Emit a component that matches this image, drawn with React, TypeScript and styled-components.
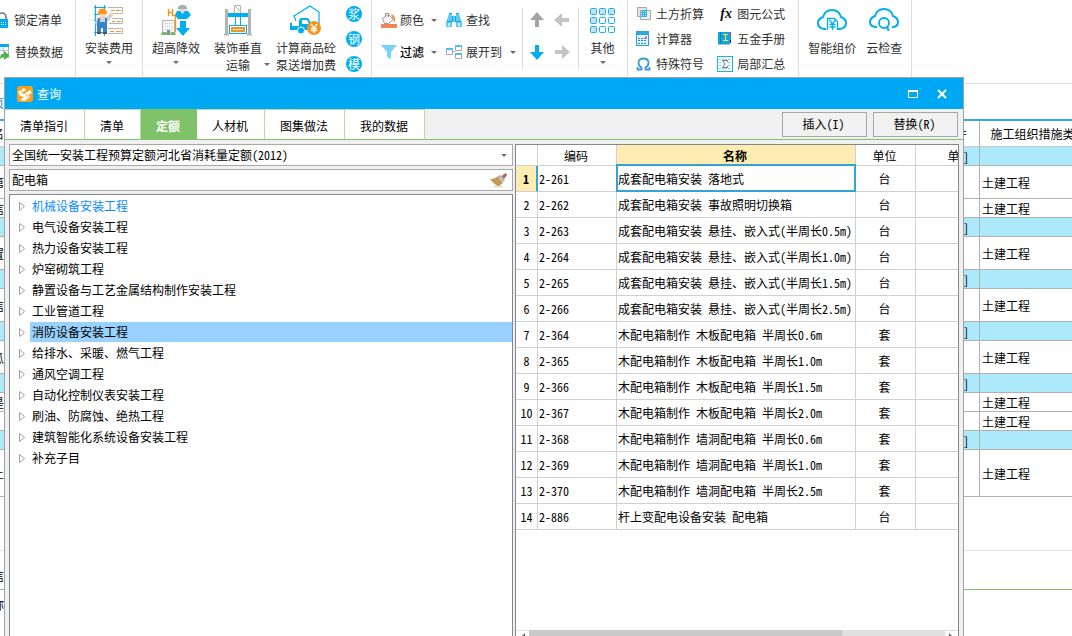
import React from "react";
import styled, { createGlobalStyle, css } from "styled-components";

const GlobalStyle = createGlobalStyle`
  *, *::before, *::after { box-sizing: border-box; }
  body {
    margin: 0;
    background: #fff;
    overflow: hidden;
    font-family: "Noto Sans Mono CJK SC", "Noto Sans CJK SC", sans-serif;
    font-size: 12px;
    line-height: 16px;
    color: #000;
  }
  button, input, select { font: inherit; color: inherit; }
  button { border: 0; background: none; padding: 0; cursor: pointer; }
  svg { display: block; flex: none; }
`;

const Desktop = styled.div`
  position: relative;
  height: 100vh;
  overflow: hidden;
  display: flex;
  flex-direction: column;
`;

/* ---------- ribbon ---------- */

const Ribbon = styled.header`
  display: flex;
  flex: none;
  height: 84px;
  border-bottom: 1px solid #e0e0e0;
  font-family: "Noto Sans CJK SC", sans-serif;
  color: #303030;
`;

const Group = styled.section<{ $gap?: number; $pad?: string }>`
  display: flex;
  flex: none;
  gap: ${(p) => p.$gap ?? 0}px;
  padding: ${(p) => p.$pad ?? "0 9px"};
  border-right: 1px solid #dcdcdc;
`;

const Stack = styled.div<{ $row: number; $top: number }>`
  display: grid;
  grid-auto-rows: ${(p) => p.$row}px;
  align-content: start;
  padding-top: ${(p) => p.$top}px;
`;

const Finders = styled(Stack)`
  padding-left: 9px;
  padding-right: 6px;
`;

const SmallButton = styled.button<{ $strong?: boolean; $gap?: number }>`
  display: flex;
  align-items: center;
  gap: ${(p) => p.$gap ?? 4}px;
  white-space: nowrap;
  ${(p) => p.$strong && css`color: #000; font-weight: 500;`}
`;

const EdgeButton = styled(SmallButton)`
  gap: 6px;
  margin-left: -8px;
`;

const BigButton = styled.button`
  position: relative;
  display: flex;
  flex-direction: column;
  align-items: center;
  align-self: flex-start;
  padding-top: 5px;
  line-height: 17px;
  white-space: nowrap;
`;

const BigIcon = styled.span`
  display: flex;
  align-items: center;
  height: 30px;
  margin-bottom: 4px;
`;

const Trio = styled.div`
  display: flex;
  gap: 14px;
`;

const Below = styled.span`
  padding-top: 5px;
`;

const Beside = styled.span`
  position: absolute;
  right: -8px;
  bottom: 7px;
`;

const AfterLabel = styled.span`
  padding-left: 4px;
`;

const ShortRule = styled.span`
  width: 1px;
  height: 61px;
  margin-top: 8px;
  background: #dcdcdc;
`;

const ArrowPad = styled.div`
  display: grid;
  grid-template-columns: 16px 16px;
  grid-auto-rows: 32px;
  align-content: start;
  column-gap: 9px;
  padding: 4px 8px 0 6px;
`;

const OtherBox = styled.div`
  display: flex;
  padding: 0 12px 0 11px;
`;

const ToolGrid = styled.div`
  display: grid;
  grid-template-columns: auto auto;
  grid-auto-rows: 25px;
  align-content: start;
  column-gap: 13px;
  padding-top: 1px;
`;

const RoundButton = styled.button`
  width: 16px;
  height: 16px;
  align-self: center;
  border-radius: 50%;
  background: #00aeef;
  color: #fff;
  font-size: 12px;
  line-height: 16px;
  display: flex;
  justify-content: center;
`;

const FxMark = styled.span`
  width: 16px;
  padding-left: 2px;
  font: italic bold 14px/16px "Liberation Serif", serif;
  color: #111;
`;

const Caret = () => (
  <svg width="6" height="3" viewBox="0 0 6 3" aria-hidden="true">
    <path d="M0 0h6L3 3z" fill="#6b6b76" />
  </svg>
);

const B = "#00aeef";
const O = "#f7941d";
const G = "#b4b4b4";

const LockIcon = () => (
  <svg width="16" height="16" viewBox="0 0 16 16">
    <path d="M7 8V5a4 4 0 0 1 8 0v3" fill="none" stroke="#8a9096" strokeWidth="2" transform="translate(-1 0)" />
    <rect x="2" y="7" width="15" height="9" rx="1" fill={B} />
    <path d="M9 10.500h1m1 0h1m1 0h1M9 12.500h1m1 0h1m1 0h1" stroke="#fff" />
  </svg>
);
const SwapIcon = () => (
  <svg width="17" height="16" viewBox="0 0 17 16">
    <rect x=".5" y=".5" width="16" height="13" fill="#fff" stroke="#9bb" />
    <path d="M0 1.500h17" stroke={B} strokeWidth="3" />
    <path d="M0 6.500h17M0 10.500h17M5.500 3v11M11.500 3v11" stroke="#a9cfe0" />
    <path d="M8 16c0-5 1-6 4-6V7l6 4.500-6 4.500v-3c-2 0-3 0-4 3z" fill="#4fb548" />
  </svg>
);
const WorkerIcon = () => (
  <svg width="30" height="31" viewBox="0 0 30 31">
    <path d="M1.500 0v31M10.500 0v31M0 2.500h12M0 27.500h12M0 9.500h5M0 15.500h4" stroke={B} fill="none" />
    <g fill="none" stroke={G}>
      <path d="M14 2.500h14.500v6H18M18 13.500h10.500v5H15M14 23.500h14.500v5H14" />
    </g>
    <path d="M17 5.500h4m1 0h5M18 16.500h3m2 0h4M16 26.500h4m2 0h5" stroke={O} />
    <path d="M2 14l4-2h6l4-4 3 2-4 6-2 1v5H3l-2-4z" fill="#cfd3d7" />
    <circle cx="17.500" cy="9" r="1.800" fill="#fbd3a8" />
    <path d="M5 8h7v3q-3 3-7 0z" fill="#fbd3a8" />
    <path d="M4 9q0-5.500 4.500-5.500T13 9z" fill={O} />
    <path d="M4 13h2v4h5v-4h2v16H9v-6H7v6H3V18z" fill="#3b82cc" />
    <path d="M3 27h4v2H3zM9 27h4v2H9z" fill="#4b5560" />
  </svg>
);
const HighIcon = () => (
  <svg width="30" height="31" viewBox="0 0 30 31">
    <path d="M7.500 4v7M11.500 4v7M7 7.500h5" stroke={O} strokeWidth="1.400" fill="none" />
    <path d="M11 10.500h7M14.500 10.500v17" stroke={O} strokeWidth="1.400" fill="none" />
    <path d="M17 3q0-3 4.500-3T26 3v1h-9z" fill="#a9adb1" />
    <path d="M18 4h7q0 4-3.500 4T18 4z" fill="#d8dadc" />
    <path d="M16 6h3l2.500 3L24 6h3l3 4-4 4h-9l-3-4z" fill={B} />
    <path d="M19 16h6v7h4l-7 8-7-8h4z" fill={B} />
    <rect x="1.500" y="15.500" width="12" height="12" fill="#f4f4f4" stroke={G} />
    <path d="M4 18.500h7M4 21.500h7M4 24.500h7" stroke="#c8c8c8" strokeDasharray="1 1" />
    <path d="M7.500 25v5" stroke="#8b9096" strokeWidth="3" />
    <path d="M0 30q0-3 3-3t3 3zM9 30q1-3 3-3t3 3z" fill="#6cb96a" />
  </svg>
);
const LiftIcon = () => (
  <svg width="28" height="31" viewBox="0 0 28 31">
    <path d="M10.500 8V.5h6V8M11 1l5 5" stroke={G} fill="none" />
    <path d="M2.500 4v25M25.500 4v25" stroke={G} strokeWidth="3" />
    <path d="M0 29.500h5M23 29.500h5" stroke={G} strokeWidth="2" />
    <path d="M4 10h20" stroke={B} strokeWidth="4" />
    <path d="M11.500 12v8M16.500 12v8" stroke={B} />
    <rect x="5.500" y="20.500" width="17" height="8" fill="#fff" stroke={B} />
    <rect x="7" y="22" width="14" height="5" fill={O} />
    <path d="M9 24.500h10" stroke="#fff" />
  </svg>
);
const TruckIcon = () => (
  <svg width="32" height="31" viewBox="0 0 32 31">
    <path d="M6 16L4 11 20 1l9 6v12" fill="none" stroke={B} strokeWidth="1.200" />
    <path d="M0 18h2v3h7v-5q0-3 3-3h6l3 5v7H0z" fill={B} />
    <path d="M12 15h5l2 4h-7z" fill="#fff" />
    <circle cx="11" cy="25.500" r="3.500" fill={B} stroke="#fff" />
    <circle cx="24" cy="23" r="7" fill={O} />
    <path d="M21 19l3 4 3-4M24 23v5M21 23.500h6M21 25.500h6" fill="none" stroke="#fff" strokeWidth="1.300" />
  </svg>
);
const PaintIcon = () => (
  <svg width="16" height="16" viewBox="0 0 16 16">
    <path d="M1.500 6.500l6-4 5 5-5 4h-4z" fill="#fff" stroke="#999" />
    <path d="M4.500 5V1.500h3V5" fill="none" stroke="#999" />
    <path d="M10 2q5 1 4 9l-2-4z" fill="#f08a3c" />
    <rect y="12" width="16" height="4" fill="#f6825c" />
  </svg>
);
const FindIcon = () => (
  <svg width="16" height="16" viewBox="0 0 16 16">
    <path d="M3 1h3v3h4V1h3l1 4 2 5v5h-6v-5H6v5H0v-5l2-5z" fill="#5ecbf3" />
    <path d="M3 1.500h3M10 1.500h3M1 9.500h5M10 9.500h5M6.500 4v6M9.500 4v6" stroke="#23a3dc" />
    <path d="M2 11h2v3H2zM12 11h2v3h-2z" fill="#c7effc" />
  </svg>
);
const FilterIcon = () => (
  <svg width="16" height="16" viewBox="0 0 16 16">
    <path d="M0 1h16l-6 7v7l-4-2V8z" fill="#7ad3f5" />
  </svg>
);
const ExpandIcon = () => (
  <svg width="16" height="16" viewBox="0 0 16 16">
    <g fill="#fff" stroke="#a9a9a9">
      <path d="M.5 4.500h6v6h-6zM9.500 1.500h6v5h-6zM9.500 9.500h6v5h-6z" />
      <path d="M7 7.500h2" />
    </g>
    <path d="M0 5h7M9 2h7M9 10h7" stroke="#4fc0ec" strokeWidth="2" />
  </svg>
);
const DirIcon = ({ turn, color }: { turn: number; color: string }) => (
  <svg width="16" height="16" viewBox="0 0 16 16">
    <path transform={`rotate(${turn} 8 8)`} d="M8 0l7 8h-5v7H6V8H1z" fill={color} />
  </svg>
);
const NineIcon = () => (
  <svg width="25" height="25" viewBox="0 0 25 25">
    {[0, 9, 18].map((y, r) =>
      [0, 9, 18].map((x, c) => (
        <rect
          key={`${x}-${y}`}
          x={x + 0.5}
          y={y + 0.5}
          width="6"
          height="6"
          rx="1"
          fill={r === 0 || c === 0 ? "#c5dff3" : "#fff"}
          stroke="#12b0ee"
        />
      ))
    )}
  </svg>
);
const EarthIcon = () => (
  <svg width="16" height="16" viewBox="0 0 16 16">
    <rect x="1.500" y="1.500" width="9" height="9" fill="#e4e4e4" stroke="#aaa" />
    <rect x="4.500" y="4.500" width="10" height="9" fill="#eee" stroke="#aaa" />
    <rect x="5" y="4" width="6" height="7" fill="#2fb3e6" />
    <path d="M5 5.500h6M5 7.500h6M5 9.500h6" stroke="#bfe9fa" strokeDasharray="1 1" />
  </svg>
);
const CalcIcon = () => (
  <svg width="16" height="16" viewBox="0 0 16 16">
    <rect x=".5" y=".5" width="12" height="14" fill="#dff4fd" stroke="#2a9fd8" />
    <path d="M1 2.500h11" stroke="#2aa9e4" strokeWidth="3" />
    <path d="M2 7.500h9M2 9.500h9M2 12.500h9" stroke="#2a86c0" strokeDasharray="2 1" />
    <path d="M9 6.500h2" stroke="#e55" strokeWidth="2" />
  </svg>
);
const OmegaIcon = () => (
  <svg width="16" height="16" viewBox="0 0 16 16">
    <path d="M1.500 11v2.500h4v-2Q2.500 10 2.500 7q0-4.500 5-4.500t5 4.500q0 3-3 4.500v2h4V11" fill="none" stroke="#3a9bd3" strokeWidth="1.800" />
  </svg>
);
const BookIcon = () => (
  <svg width="16" height="16" viewBox="0 0 16 16">
    <rect x="1" y="1" width="12" height="12" fill="#12a5e0" />
    <path d="M3.500 1v12" stroke="#0b7fb8" />
    <path d="M6 3.500h5M8.500 4v6M6 9.500h5" stroke="#ffe23a" />
    <path d="M13.500 1v4" stroke="#e33" />
    <path d="M13.500 5v4" stroke="#3a3" />
    <path d="M13.500 9v3" stroke="#22b" />
    <path d="M1 13.500h12" stroke="#9cc" />
  </svg>
);
const SumIcon = () => (
  <svg width="16" height="16" viewBox="0 0 16 16">
    <rect x=".5" y=".5" width="15" height="15" fill="#f2fbfe" stroke="#1fb0ea" />
    <path d="M2 3.500h12M2 12.500h12M2 6.500h3M11 6.500h3M2 9.500h3M11 9.500h3" stroke="#8ed3ee" strokeDasharray="2 1" />
    <path d="M10.500 6V4.500h-5L8 8l-2.500 3.500h5V10" fill="none" stroke="#777" />
  </svg>
);
const CloudPrice = () => (
  <svg width="30" height="22" viewBox="0 0 30 22">
    <path d="M9 20H7q-6-1-6-6 0-4 5-6 2-7 9-7t9 7q5 2 5 6 0 5-6 6h-2" fill="none" stroke={B} strokeWidth="2" />
    <path d="M10.500 21V9.500h7l3 3V21" fill="none" stroke={B} strokeWidth="1.300" />
    <path d="M12.500 11l3 4 3-4M15.500 15v6M12.500 15.500h6M12.500 18h6" fill="none" stroke={B} strokeWidth="1.300" />
  </svg>
);
const CloudCheck = () => (
  <svg width="30" height="24" viewBox="0 0 30 24">
    <path d="M8 19q-7 0-7-5 0-4 5-6 2-7 9-7t9 7q5 2 5 6 0 5-6 5" fill="none" stroke={B} strokeWidth="2" />
    <circle cx="15" cy="15" r="5" fill="none" stroke={B} strokeWidth="1.800" />
    <path d="M18 18l1.500 5" stroke={B} strokeWidth="2" />
  </svg>
);

const toolGrid: [React.ReactNode, string][] = [
  [<EarthIcon />, "土方折算"],
  [<FxMark aria-hidden="true">fx</FxMark>, "图元公式"],
  [<CalcIcon />, "计算器"],
  [<BookIcon />, "五金手册"],
  [<OmegaIcon />, "特殊符号"],
  [<SumIcon />, "局部汇总"],
];

/* ---------- sheet behind the dialog ---------- */

const Sheet = styled.main`
  flex: 1;
  display: flex;
  flex-direction: column;
  margin-left: -8px;
`;

const PageTab = styled.div`
  height: 37px;
  padding-top: 11px;
  border-bottom: 2px solid #35a9e0;
  color: #0a7fe0;
`;

const SheetTable = styled.table`
  width: calc(100% + 28px);
  table-layout: fixed;
  border-collapse: separate;
  border-spacing: 0;
  th, td {
    padding: 2px 0 0 2px;
    border-bottom: 1px solid #b0b0b0;
    text-align: left;
    overflow: hidden;
    white-space: nowrap;
    font-weight: 400;
  }
  td { line-height: 14px; }
  th { height: 26px; padding: 0 3px 0 0; border-bottom-color: #c8c8c8; text-align: center; }
  th:first-child, td:first-child { padding-left: 0; text-align: left; }
  th:nth-child(2), td:nth-child(2) { border-right: 1px solid #b0b0b0; text-align: right; padding-right: 10px; }
  th:nth-child(2) { padding-right: 12px; }
`;

const SheetRow = styled.tr<{ $h: number; $band: boolean }>`
  height: ${(p) => p.$h}px;
  background: ${(p) => (p.$band ? "#ace9fb" : "#fff")};
`;

const SheetFoot = styled.div`
  height: 54px;
  border-bottom: 1px solid #e0e0e0;
`;
const DetailTabs = styled.div`
  height: 39px;
  padding-top: 17px;
  border-bottom: 1px solid #80c269;
`;
const DetailHead = styled.div`
  padding-top: 7px;
`;

const sheetRows: [number, boolean, string][] = [
  [19, true, ""], [33, false, "第"], [19, false, "信"], [19, true, ""], [33, false, "置"],
  [19, true, ""], [33, false, "信"], [19, true, ""], [33, false, "瓜"], [19, true, ""],
  [19, false, "是"], [19, false, "3"], [19, true, ""], [47, false, "土"],
];

/* ---------- dialog ---------- */

const Dialog = styled.div`
  position: absolute;
  top: 77px;
  right: 108px;
  bottom: -17px;
  left: 4px;
  display: flex;
  flex-direction: column;
  border: 1px solid #a2a2a2;
  background: #f0f0f0;
`;

const TitleBar = styled.div`
  display: flex;
  align-items: center;
  flex: none;
  height: 31px;
  padding: 0 15px 0 12px;
  gap: 4px;
  background: #00a8f3;
  color: #fff;
  font-family: "Noto Sans CJK SC", sans-serif;
`;
const Title = styled.h1`
  flex: 1;
  margin: 0;
  font-size: 12px;
  font-weight: 400;
`;
const WindowButton = styled.button`
  display: flex;
  width: 12px;
  height: 12px;
  margin-left: 13px;
`;

const TabBar = styled.div`
  display: flex;
  align-items: center;
  flex: none;
  height: 31px;
  padding-right: 5px;
  border-bottom: 1px solid #80c269;
`;
const Tab = styled.button<{ $active?: boolean }>`
  height: 30px;
  padding: 2px 16px 0 15px;
  background: #fff;
  border-top: 1px solid #b5dfa5;
  border-right: 1px solid #b5dfa5;
  white-space: nowrap;
  ${(p) => p.$active && css`
    background: #80c269;
    border-color: #80c269;
    color: #fff;
    font-weight: 700;
  `}
`;
const TabSpace = styled.span`
  flex: 1;
`;
const Action = styled.button`
  width: 85px;
  height: 25px;
  margin-left: 6px;
  padding-right: 2px;
  border: 1px solid #a8a8a8;
  background: #f1f1f1;
`;

const Panes = styled.div`
  flex: 1;
  min-height: 0;
  display: grid;
  grid-template-columns: 504fr 444fr;
  gap: 2px;
  padding: 4px;
`;
const Left = styled.div`
  display: flex;
  flex-direction: column;
  gap: 3px;
  min-width: 0;
`;
const Field = styled.div`
  display: flex;
  align-items: center;
  flex: none;
  height: 22px;
  padding-right: 5px;
  border: 1px solid #a8a8a8;
  background: #fff;
`;
const Combo = styled.select`
  flex: 1;
  min-width: 0;
  height: 20px;
  padding: 0 2px;
  border: 0;
  appearance: none;
  background: transparent;
`;
const Search = styled.input`
  flex: 1;
  min-width: 0;
  height: 20px;
  padding: 0 2px 2px;
  border: 0;
  background: transparent;
`;
const Tree = styled.ul`
  flex: 1;
  min-height: 0;
  margin: 0;
  padding: 1px 0 0;
  list-style: none;
  border: 1px solid #828790;
  background: #fff;
`;
const Node = styled.li`
  display: flex;
  align-items: center;
  height: 21px;
  padding-left: 9px;
  gap: 5px;
`;
const NodeLabel = styled.button<{ $selected?: boolean; $linked?: boolean }>`
  flex: 1;
  align-self: flex-start;
  height: 20px;
  padding-left: 2px;
  text-align: left;
  background: ${(p) => (p.$selected ? "#99d1ff" : "transparent")};
  color: ${(p) => (p.$linked ? "#0a8cff" : "#000")};
`;

const Grid = styled.div`
  display: flex;
  flex-direction: column;
  min-width: 0;
  border: 1px solid #828790;
  background: #fff;
`;
const GridView = styled.div`
  flex: 1;
  min-height: 0;
  overflow: hidden;
`;
const GridTable = styled.table`
  width: 490px;
  table-layout: fixed;
  border-collapse: separate;
  border-spacing: 0;
`;
const Th = styled.th<{ $on?: boolean }>`
  height: 21px;
  padding: 2px 2px 0 0;
  border-right: 1px solid #d0d0d0;
  border-bottom: 1px solid #d0d0d0;
  font-weight: ${(p) => (p.$on ? 700 : 400)};
  background: ${(p) => (p.$on ? "#ffecb0" : "#fff")};
`;
const Td = styled.td<{ $center?: boolean; $on?: boolean }>`
  position: relative;
  height: 26px;
  padding: ${(p) => (p.$center ? "0 2px 0 0" : "0 0 0 1px")};
  border-right: 1px solid #d0d0d0;
  border-bottom: 1px solid #d0d0d0;
  white-space: nowrap;
  text-align: ${(p) => (p.$center ? "center" : "left")};
  ${(p) => p.$on && css`
    &::after {
      content: "";
      position: absolute;
      inset: -2px -1px -1px -1px;
      border: 2px solid #35a4d4;
    }
  `}
`;
const RowHead = styled.th<{ $on?: boolean }>`
  height: 26px;
  padding: 0;
  border-right: ${(p) => (p.$on ? "2px solid #35a4d4" : "1px solid #d0d0d0")};
  border-bottom: 1px solid #d0d0d0;
  font-weight: ${(p) => (p.$on ? 700 : 400)};
  background: ${(p) => (p.$on ? "#ffecb0" : "#fff")};
`;
const ScrollBar = styled.div`
  display: flex;
  flex: none;
  height: 17px;
  background: #e0e0e0;
`;
const ScrollEnd = styled.button`
  display: flex;
  align-items: flex-start;
  justify-content: center;
  width: 13px;
  padding-top: 2px;
  background: #fff;
  border-top: 1px solid #e0e0e0;
`;
const Thumb = styled.div`
  width: 313px;
  margin-right: auto;
  background: #c9c9c9;
`;

const nodes = [
  "机械设备安装工程", "电气设备安装工程", "热力设备安装工程", "炉窑砌筑工程",
  "静置设备与工艺金属结构制作安装工程", "工业管道工程", "消防设备安装工程",
  "给排水、采暖、燃气工程", "通风空调工程", "自动化控制仪表安装工程",
  "刷油、防腐蚀、绝热工程", "建筑智能化系统设备安装工程", "补充子目",
];

const items: [string, string, string][] = [
  ["2-261", "成套配电箱安装 落地式", "台"],
  ["2-262", "成套配电箱安装 事故照明切换箱", "台"],
  ["2-263", "成套配电箱安装 悬挂、嵌入式(半周长0.5m)", "台"],
  ["2-264", "成套配电箱安装 悬挂、嵌入式(半周长1.0m)", "台"],
  ["2-265", "成套配电箱安装 悬挂、嵌入式(半周长1.5m)", "台"],
  ["2-266", "成套配电箱安装 悬挂、嵌入式(半周长2.5m)", "台"],
  ["2-364", "木配电箱制作 木板配电箱 半周长0.6m", "套"],
  ["2-365", "木配电箱制作 木板配电箱 半周长1.0m", "套"],
  ["2-366", "木配电箱制作 木板配电箱 半周长1.5m", "套"],
  ["2-367", "木配电箱制作 木板配电箱 半周长2.0m", "套"],
  ["2-368", "木配电箱制作 墙洞配电箱 半周长0.6m", "套"],
  ["2-369", "木配电箱制作 墙洞配电箱 半周长1.0m", "套"],
  ["2-370", "木配电箱制作 墙洞配电箱 半周长2.5m", "套"],
  ["2-886", "杆上变配电设备安装 配电箱", "台"],
];

const tabs = ["清单指引", "清单", "定额", "人材机", "图集做法", "我的数据"];

const Broom = () => (
  <svg width="17" height="15" viewBox="0 0 17 15">
    <ellipse cx="8" cy="13.500" rx="5" ry="1" fill="#ddd" />
    <path d="M11 4l3-3 2-1 1 2-3 4z" fill="#b8664a" />
    <path d="M8 3l3-1 4 5-2 2z" fill="#a9b4c4" />
    <path d="M8 3q2 4 5 6-1 3-5 4Q3 11 0 6q5 0 8-3z" fill="#c9a15a" />
    <path d="M3 6l5 6M6 5l5 6" stroke="#a0763a" strokeWidth=".6" />
  </svg>
);

export default function App() {
  return (
    <>
      <GlobalStyle />
      <Desktop>
        <Ribbon>
          <Group $pad="0 12px 0 0">
            <Stack $row={32} $top={4}>
              <EdgeButton><LockIcon />锁定清单</EdgeButton>
              <EdgeButton><SwapIcon />替换数据</EdgeButton>
            </Stack>
          </Group>
          <Group>
            <BigButton>
              <BigIcon><WorkerIcon /></BigIcon>安装费用<Below><Caret /></Below>
            </BigButton>
          </Group>
          <Group $gap={10}>
            <Trio>
              <BigButton>
                <BigIcon><HighIcon /></BigIcon>超高降效<Below><Caret /></Below>
              </BigButton>
              <BigButton>
                <BigIcon><LiftIcon /></BigIcon>
                <span>装饰垂直</span>
                <span>运输</span>
                <Beside><Caret /></Beside>
              </BigButton>
              <BigButton>
                <BigIcon><TruckIcon /></BigIcon>
                <span>计算商品砼</span>
                <span>泵送增加费</span>
              </BigButton>
            </Trio>
            <Stack $row={25} $top={1}>
              {["浆", "钢", "模"].map((c) => <RoundButton key={c}>{c}</RoundButton>)}
            </Stack>
          </Group>
          <Group $pad="0 0 0 9px">
            <Stack $row={32} $top={4}>
              <SmallButton $gap={3}><PaintIcon />颜色<AfterLabel><Caret /></AfterLabel></SmallButton>
              <SmallButton $gap={3} $strong><FilterIcon />过滤<AfterLabel><Caret /></AfterLabel></SmallButton>
            </Stack>
            <Finders $row={32} $top={4}>
              <SmallButton><FindIcon />查找</SmallButton>
              <SmallButton><ExpandIcon />展开到<AfterLabel><Caret /></AfterLabel></SmallButton>
            </Finders>
            <ShortRule />
            <ArrowPad>
              <SmallButton aria-label="上移"><DirIcon turn={0} color="#a3a3a3" /></SmallButton>
              <SmallButton aria-label="后退"><DirIcon turn={-90} color="#c4c4c4" /></SmallButton>
              <SmallButton aria-label="下移"><DirIcon turn={180} color={B} /></SmallButton>
              <SmallButton aria-label="前进"><DirIcon turn={90} color="#c4c4c4" /></SmallButton>
            </ArrowPad>
            <ShortRule />
            <OtherBox>
              <BigButton>
                <BigIcon><NineIcon /></BigIcon>其他<Below><Caret /></Below>
              </BigButton>
            </OtherBox>
          </Group>
          <Group $pad="0 13px 0 8px">
            <ToolGrid>
              {toolGrid.map(([icon, label]) => (
                <SmallButton key={label}>{icon}{label}</SmallButton>
              ))}
            </ToolGrid>
          </Group>
          <Group $gap={10}>
            <BigButton><BigIcon><CloudPrice /></BigIcon>智能组价</BigButton>
            <BigButton><BigIcon><CloudCheck /></BigIcon>云检查</BigButton>
          </Group>
        </Ribbon>

        <Sheet>
          <PageTab>页</PageTab>
          <SheetTable>
            <colgroup>
              <col style={{ width: 60 }} />
              <col />
              <col style={{ width: 120 }} />
            </colgroup>
            <thead>
              <tr><th>名</th><th>件</th><th>施工组织措施类别</th></tr>
            </thead>
            <tbody>
              {sheetRows.map(([h, band, mark], i) => (
                <SheetRow key={i} $h={h} $band={band}>
                  <td>{mark}</td>
                  <td>{band ? "]" : ""}</td>
                  <td>{band ? "" : "土建工程"}</td>
                </SheetRow>
              ))}
            </tbody>
          </SheetTable>
          <SheetFoot />
          <DetailTabs>信</DetailTabs>
          <DetailHead>称</DetailHead>
        </Sheet>

        <Dialog role="dialog" aria-label="查询">
          <TitleBar>
            <svg width="16" height="16" viewBox="0 0 16 16">
              <rect width="16" height="16" rx="3" fill="#f9a11b" />
              <path d="M1 6l6-4 2 2-4 3 2 1 6-4 2 3-4 2 2 2-5 4-5-1 4-3-4-1-1-2z" fill="#fff" />
              <path d="M4 4l3 4M9 8l2 4" stroke="#f9a11b" strokeWidth=".8" />
            </svg>
            <Title>查询</Title>
            <WindowButton aria-label="最大化">
              <svg width="12" height="12" viewBox="0 0 12 12">
                <path d="M1.500 3v6.500h9V3" fill="none" stroke="#fff" />
                <path d="M1 3h10" stroke="#fff" strokeWidth="2" />
              </svg>
            </WindowButton>
            <WindowButton aria-label="关闭">
              <svg width="12" height="12" viewBox="0 0 12 12">
                <path d="M2 2l8 8M10 2l-8 8" stroke="#fff" strokeWidth="2" />
              </svg>
            </WindowButton>
          </TitleBar>
          <TabBar>
            {tabs.map((t) => <Tab key={t} $active={t === "定额"}>{t}</Tab>)}
            <TabSpace />
            <Action>插入(I)</Action>
            <Action>替换(R)</Action>
          </TabBar>
          <Panes>
            <Left>
              <Field>
                <Combo aria-label="定额库" defaultValue="a">
                  <option value="a">全国统一安装工程预算定额河北省消耗量定额(2012)</option>
                </Combo>
                <Caret />
              </Field>
              <Field>
                <Search aria-label="搜索" defaultValue="配电箱" />
                <button aria-label="清除"><Broom /></button>
              </Field>
              <Tree>
                {nodes.map((n, i) => (
                  <Node key={n}>
                    <svg width="6" height="9" viewBox="0 0 6 9">
                      <path d="M.5.500v8l5-4z" fill="#fff" stroke="#a0a0a0" />
                    </svg>
                    <NodeLabel $selected={i === 6} $linked={i === 0}>{n}</NodeLabel>
                  </Node>
                ))}
              </Tree>
            </Left>
            <Grid>
              <GridView>
                <GridTable>
                  <colgroup>
                    <col style={{ width: 22 }} />
                    <col style={{ width: 79 }} />
                    <col style={{ width: 239 }} />
                    <col style={{ width: 60 }} />
                    <col style={{ width: 90 }} />
                  </colgroup>
                  <thead>
                    <tr>
                      <Th /><Th>编码</Th><Th $on>名称</Th><Th>单位</Th><Th>单价</Th>
                    </tr>
                  </thead>
                  <tbody>
                    {items.map(([code, name, unit], i) => (
                      <tr key={code}>
                        <RowHead $on={i === 0}>{i + 1}</RowHead>
                        <Td>{code}</Td>
                        <Td $on={i === 0}>{name}</Td>
                        <Td $center>{unit}</Td>
                        <Td />
                      </tr>
                    ))}
                  </tbody>
                </GridTable>
              </GridView>
              <ScrollBar>
                <ScrollEnd aria-label="向左">
                  <svg width="5" height="8" viewBox="0 0 5 8"><path d="M5 0v8L1 4z" fill="#606060" /></svg>
                </ScrollEnd>
                <Thumb />
                <ScrollEnd aria-label="向右">
                  <svg width="5" height="8" viewBox="0 0 5 8"><path d="M0 0v8l4-4z" fill="#606060" /></svg>
                </ScrollEnd>
              </ScrollBar>
            </Grid>
          </Panes>
        </Dialog>
      </Desktop>
    </>
  );
}
